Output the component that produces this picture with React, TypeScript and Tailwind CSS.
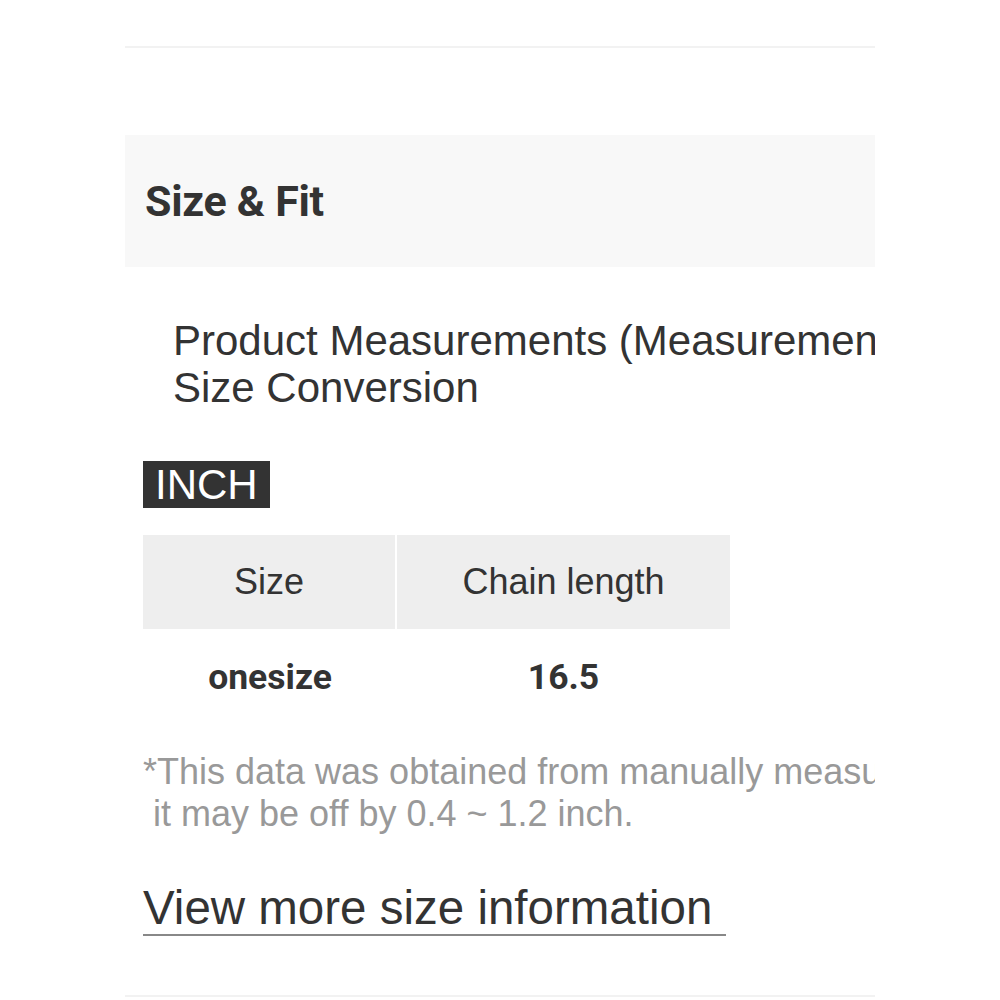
import React from "react";

export default function App() {
  return (
    <div className="w-[1000px] h-[1000px] bg-white overflow-hidden">
      <div className="mx-auto w-[750px] overflow-hidden">
        <div className="h-[46px]" />
        <div className="h-[2px] bg-[#f2f2f2]" />
        <div className="h-[87px]" />
        <div className="h-[132px] bg-[#f8f8f8] flex items-center pl-[20px]">
          <h2 className="text-[43px] leading-[50px] font-bold text-[#333] font-['Roboto',sans-serif] tracking-[-0.3px]">Size &amp; Fit</h2>
        </div>
        <div className="pt-[50px] pl-[48px] font-['Liberation_Sans',Arial,sans-serif] text-[42px] leading-[47px] text-[#333] whitespace-nowrap">
          <div>Product Measurements (Measurements in cm)</div>
          <div>Size Conversion</div>
        </div>
        <div className="pl-[18px] pt-[50px]">
          <span className="inline-block bg-[#333] text-white font-['Liberation_Sans',Arial,sans-serif] text-[42px] leading-[47px] px-[12px]">INCH</span>
        </div>
        <div className="pl-[18px] pt-[27px]">
          <div className="w-[587px] font-['Liberation_Sans',Arial,sans-serif] text-[36px] text-[#333]">
            <div className="flex h-[94px] bg-[#eeeeee]">
              <div className="w-[254px] flex items-center justify-center border-r-2 border-white">Size</div>
              <div className="flex-1 flex items-center justify-center">Chain length</div>
            </div>
            <div className="flex h-[98px] font-['Roboto',sans-serif] font-bold text-[35.5px]">
              <div className="w-[254px] flex items-center justify-center">onesize</div>
              <div className="flex-1 flex items-center justify-center">16.5</div>
            </div>
          </div>
        </div>
        <div className="pl-[18px] pt-[24px] font-['Liberation_Sans',Arial,sans-serif] text-[36px] leading-[42px] text-[#999] whitespace-pre">
          <div>*This data was obtained from manually measuring the product,</div>
          <div> it may be off by 0.4 ~ 1.2 inch.</div>
        </div>
        <div className="pl-[18px] pt-[47px]">
          <span className="inline-block font-['Liberation_Sans',Arial,sans-serif] text-[47.5px] leading-[52px] text-[#333] border-b-2 border-[#888] pr-[14px]">View more size information</span>
        </div>
        <div className="h-[59px]" />
        <div className="h-[2px] bg-[#f2f2f2]" />
      </div>
    </div>
  );
}
